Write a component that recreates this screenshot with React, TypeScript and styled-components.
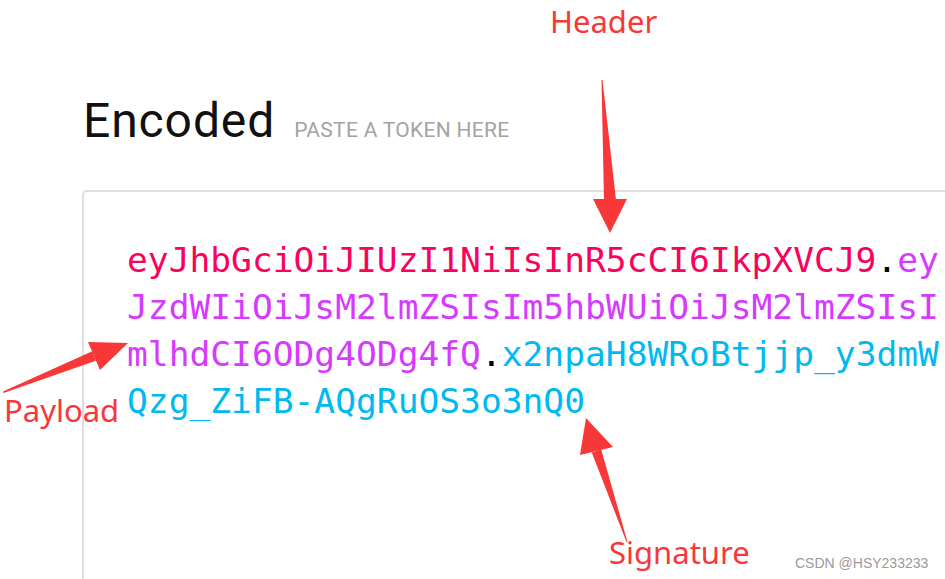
import React from "react";
import styled, { createGlobalStyle } from "styled-components";

const Global = createGlobalStyle`
  html, body { margin: 0; padding: 0; background: #ffffff; }
  body { overflow: hidden; }
`;

const Page = styled.div`
  position: relative;
  width: 945px;
  height: 579px;
  overflow: hidden;
  box-sizing: border-box;
  padding: 97px 0 0 83px;
  background: #ffffff;
`;

const TitleRow = styled.div`
  display: flex;
  align-items: baseline;
  gap: 19px;
`;

const Title = styled.h1`
  margin: 0;
  font-family: Roboto, "Liberation Sans", sans-serif;
  font-weight: 400;
  font-size: 48px;
  line-height: 48px;
  letter-spacing: 0.9px;
  color: #111111;
`;

const Hint = styled.span`
  font-family: Roboto, "Liberation Sans", sans-serif;
  font-size: 21px;
  letter-spacing: 0.3px;
  color: #a3a3a3;
`;

const TokenBox = styled.div`
  margin-top: 45px;
  margin-left: -1px;
  width: 1000px;
  height: 500px;
  box-sizing: border-box;
  border: 2px solid #dedede;
  border-right: none;
  border-radius: 5px 0 0 0;
  padding: 45px 0 0 43px;
`;

const TokenLine = styled.div`
  font-family: "DejaVu Sans Mono", "Liberation Mono", monospace;
  font-size: 34.6px;
  line-height: 47px;
  white-space: nowrap;
`;

const Part = styled.span<{ $c: string }>`
  color: ${(p) => p.$c};
`;

const Label = styled.div<{ $x: number; $y: number }>`
  position: absolute;
  left: ${(p) => p.$x}px;
  top: ${(p) => p.$y}px;
  font-family: "Noto Sans", "Open Sans", sans-serif;
  font-size: 31px;
  line-height: 1;
  color: #f83838;
  white-space: nowrap;
`;

const Watermark = styled.div`
  position: absolute;
  left: 795px;
  top: 556px;
  font-family: "Liberation Sans", Arial, sans-serif;
  font-size: 14px;
  line-height: 1;
  color: #9a9a9a;
  white-space: nowrap;
`;

const Overlay = styled.svg`
  position: absolute;
  left: 0;
  top: 0;
  pointer-events: none;
`;

const RED_H = "#fb015b";
const PURPLE = "#d63aff";
const BLUE = "#00b9f1";
const DOT = "#000000";
const ARROW = "#f83838";

export default function App() {
  return (
    <>
      <Global />
      <Page>
        <TitleRow>
          <Title>Encoded</Title>
          <Hint>PASTE A TOKEN HERE</Hint>
        </TitleRow>
        <TokenBox>
          <TokenLine>
            <Part $c={RED_H}>eyJhbGciOiJIUzI1NiIsInR5cCI6IkpXVCJ9</Part>
            <Part $c={DOT}>.</Part>
            <Part $c={PURPLE}>ey</Part>
          </TokenLine>
          <TokenLine>
            <Part $c={PURPLE}>JzdWIiOiJsM2lmZSIsIm5hbWUiOiJsM2lmZSIsI</Part>
          </TokenLine>
          <TokenLine>
            <Part $c={PURPLE}>mlhdCI6ODg4ODg4fQ</Part>
            <Part $c={DOT}>.</Part>
            <Part $c={BLUE}>x2npaH8WRoBtjjp_y3dmW</Part>
          </TokenLine>
          <TokenLine>
            <Part $c={BLUE}>Qzg_ZiFB-AQgRuOS3o3nQ0</Part>
          </TokenLine>
        </TokenBox>

        <Overlay width="945" height="579" viewBox="0 0 945 579">
          <polygon points="601.5,80 602.5,80 616,200 604,200" fill={ARROW} />
          <polygon points="593,199 627,199 610,233" fill={ARROW} />
          <polygon points="3,391.5 3.5,393 95.8,360.7 92.2,351.3" fill={ARROW} />
          <polygon points="88,342 100,370 128,343" fill={ARROW} />
          <polygon points="626.5,542 627.5,542 601.2,449.4 591.8,452.6" fill={ARROW} />
          <polygon points="580,455 613,447 586,418" fill={ARROW} />
        </Overlay>

        <Label $x={550} $y={6}>Header</Label>
        <Label $x={4} $y={395}>Payload</Label>
        <Label $x={609} $y={537}>Signature</Label>
        <Watermark>CSDN @HSY233233</Watermark>
      </Page>
    </>
  );
}
